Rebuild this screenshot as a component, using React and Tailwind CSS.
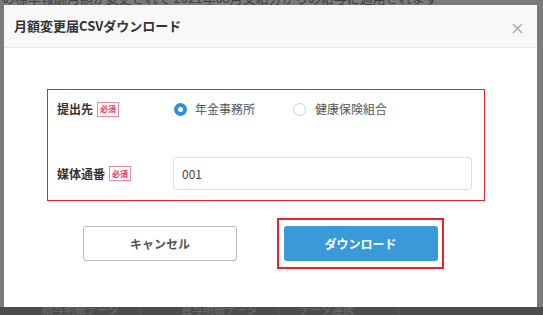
import React from "react";

function Badge() {
  return (
    <span className="ml-[4px] inline-flex h-[15px] items-center border border-[#f08aa0] px-[2px] text-[8px] font-bold leading-none text-[#e8335a]">
      必須
    </span>
  );
}

export default function App() {
  return (
    <div
      className="relative h-[315px] w-[543px] overflow-hidden bg-[#7b7b7b]"
      style={{ fontFamily: '"Noto Sans CJK JP", "Noto Sans", sans-serif' }}
    >
      {/* background page (dimmed) */}
      <div className="flex h-full flex-col">
        <div className="-mt-[9px] pl-[2px] text-[13px] leading-[14px] text-[#3d3d3d] whitespace-nowrap">
          の標準報酬月額が変更されて 2021年08月支給分からの給与に適用されます
        </div>
        <div className="flex-1" />
        <div className="flex h-[8px] bg-[#4c4c4c] text-[11px] leading-[4px] text-[#6c6c6c]">
          <div className="w-[140px] pl-[42px]">給与明細データ</div>
          <div className="w-[138px] border-l border-[#5a5a5a] pl-[40px]">賞与明細データ</div>
          <div className="w-[120px] border-l border-[#5a5a5a] pl-[20px]">データ連携</div>
          <div className="flex-1 border-l border-[#5a5a5a]" />
        </div>
      </div>

      {/* modal */}
      <div className="absolute left-[4px] top-[5px] flex h-[302px] w-[533px] flex-col bg-white">
        <div className="flex h-[43px] items-center justify-between border-b border-[#e6e6e6] bg-[#f8f8f8] pl-[10px] pr-[14px]">
          <span className="text-[13px] font-bold text-[#333]">月額変更届CSVダウンロード</span>
          <svg width="11" height="11" viewBox="0 0 11 11" className="mt-[4px]">
            <path d="M1 1L10 10M10 1L1 10" stroke="#a8a8a8" strokeWidth="1.4" />
          </svg>
        </div>

        <div className="mt-[41px] ml-[43px] w-[438px] border-[1.5px] border-[#e8232b] pl-[9px] pr-[12px] pt-[9px] pb-[10px]">
          <div className="flex h-[20px] items-center">
            <div className="flex w-[117px] items-center text-[12px] font-bold text-[#333]">
              提出先
              <Badge />
            </div>
            <label className="flex w-[119px] items-center">
              <span className="h-[13px] w-[13px] rounded-full border-[4px] border-[#2d8fdd] bg-white" />
              <span className="ml-[8px] text-[12px] text-[#555]">年金事務所</span>
            </label>
            <label className="flex items-center">
              <span className="h-[13px] w-[13px] rounded-full border border-[#cfcfcf] bg-white" />
              <span className="ml-[9px] text-[12px] text-[#555]">健康保険組合</span>
            </label>
          </div>
          <div className="mt-[38px] flex items-center">
            <div className="flex w-[116px] items-center text-[12px] font-bold text-[#333]">
              媒体通番
              <Badge />
            </div>
            <div className="flex h-[33px] flex-1 items-center rounded-[3px] border border-[#dedede] pl-[8px] text-[12px] text-[#444]">
              001
            </div>
          </div>
        </div>

        <div className="mt-[17px] flex items-center">
          <button className="ml-[79px] h-[35px] w-[154px] rounded-[3px] border border-[#b8b8b8] bg-white text-[12px] font-bold text-[#555]">
            キャンセル
          </button>
          <div className="ml-[40px] border-2 border-[#e8232b] px-[4.5px] py-[6px]">
            <button className="h-[35px] w-[154px] rounded-[3px] bg-[#3a9ad9] text-[12px] font-bold text-white">
              ダウンロード
            </button>
          </div>
        </div>
      </div>
    </div>
  );
}
